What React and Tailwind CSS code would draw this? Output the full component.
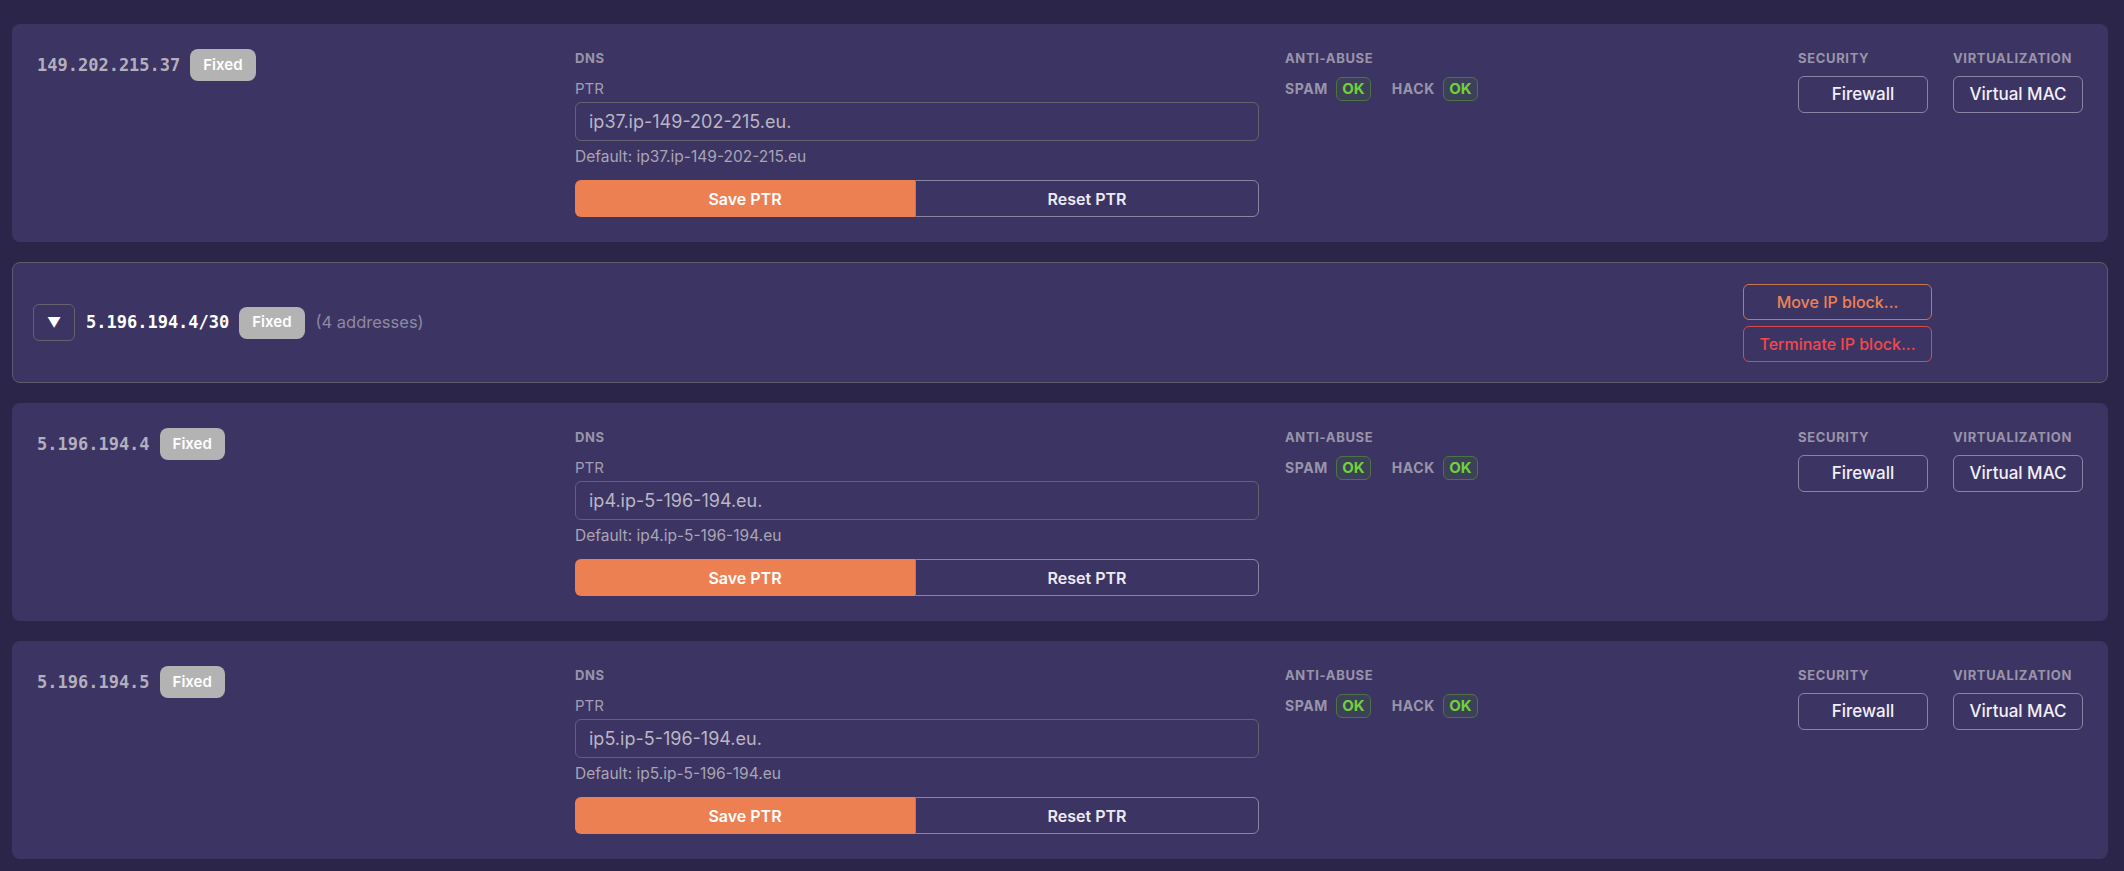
import React from "react";

const sans = { fontFamily: "Inter, 'Open Sans', sans-serif" };

const addresses = [
  { ip: "149.202.215.37", ptr: "ip37.ip-149-202-215.eu." },
  { ip: "5.196.194.4", ptr: "ip4.ip-5-196-194.eu." },
  { ip: "5.196.194.5", ptr: "ip5.ip-5-196-194.eu." },
];

function FixedBadge() {
  return (
    <span className="inline-flex h-8 items-center rounded-lg bg-[#b3b3b3] px-[13px] text-[15px] font-semibold text-white">
      Fixed
    </span>
  );
}

function SectionLabel({ children }) {
  return (
    <div className="h-[18px] text-[13px] font-bold uppercase leading-[18px] tracking-[0.05em] text-[#9a94aa]">
      {children}
    </div>
  );
}

function OkBadge() {
  return (
    <span className="inline-flex h-6 w-[35px] items-center justify-center rounded-md border border-[#4d7345] bg-[#3d4157] text-[15px] font-bold text-[#6fd23b]">
      OK
    </span>
  );
}

function OutlineButton({ children }) {
  return (
    <button className="flex h-[37px] w-[130px] items-center justify-center rounded-md border border-[#8a84a3] text-[17px] font-medium text-[#f1eff7]">
      {children}
    </button>
  );
}

function AddressCard({ ip, ptr }) {
  const fallback = ptr.replace(/\.$/, "");
  return (
    <div className="flex rounded-lg bg-[#3c3463] pl-[25px] pr-[25px] pt-[25px] pb-[25px]">
      <div className="flex w-[538px] items-start gap-[10px]">
        <span className="mt-[3px] font-['DejaVu_Sans_Mono',monospace] text-[17px] font-bold leading-[26px] text-[#b3afbd]">
          {ip}
        </span>
        <FixedBadge />
      </div>

      <div className="flex w-[684px] flex-col">
        <SectionLabel>DNS</SectionLabel>
        <div className="mt-3 text-[15px] leading-5 text-[#a39eb2]">PTR</div>
        <input
          readOnly
          value={ptr}
          className="mt-[3px] h-[39px] w-full rounded-md border border-[#67616f] bg-transparent pl-[13px] text-[18px] text-[#bab6c4] outline-none"
          style={sans}
        />
        <div className="mt-[6px] text-[15.5px] leading-5 text-[#a9a5b3]">Default: {fallback}</div>
        <div className="mt-[13px] flex h-[37px]">
          <button className="w-[340px] rounded-l-md bg-[#ec8053] text-[16px] font-semibold text-white">
            Save PTR
          </button>
          <button className="flex-1 rounded-r-md border border-[#8a84a3] text-[16px] font-semibold text-[#eceaf4]">
            Reset PTR
          </button>
        </div>
      </div>

      <div className="ml-[26px] flex flex-1 flex-col">
        <SectionLabel>Anti-abuse</SectionLabel>
        <div className="mt-[9px] flex items-center">
          <span className="text-[14px] font-bold tracking-[0.04em] text-[#9a94aa]">SPAM</span>
          <span className="ml-[8px]">
            <OkBadge />
          </span>
          <span className="ml-[21px] text-[14px] font-bold tracking-[0.04em] text-[#9a94aa]">HACK</span>
          <span className="ml-[8px]">
            <OkBadge />
          </span>
        </div>
      </div>

      <div className="flex w-[130px] flex-col">
        <SectionLabel>Security</SectionLabel>
        <div className="mt-[9px]">
          <OutlineButton>Firewall</OutlineButton>
        </div>
      </div>

      <div className="ml-[25px] flex w-[130px] flex-col">
        <SectionLabel>Virtualization</SectionLabel>
        <div className="mt-[9px]">
          <OutlineButton>Virtual MAC</OutlineButton>
        </div>
      </div>
    </div>
  );
}

function BlockCard() {
  return (
    <div className="flex h-[121px] items-center rounded-lg border border-[#5f5a6c] bg-[#3c3463] pl-5 pr-[175px]">
      <button className="flex h-[37px] w-[42px] items-center justify-center rounded-md border border-[#67616f] text-[14px] text-white">
        ▼
      </button>
      <span className="ml-[11px] font-['DejaVu_Sans_Mono',monospace] text-[17px] font-bold text-white">
        5.196.194.4/30
      </span>
      <span className="ml-[10px]">
        <FixedBadge />
      </span>
      <span className="ml-[11px] text-[16.5px] text-[#8e89a2]">(4 addresses)</span>
      <div className="ml-auto flex w-[189px] flex-col gap-[6px]">
        <button className="flex h-[36px] items-center justify-center rounded-md border border-[#c9764f] text-[16px] font-medium text-[#ee8254]">
          Move IP block...
        </button>
        <button className="flex h-[36px] items-center justify-center rounded-md border border-[#d84a4d] text-[16px] font-medium text-[#f4484a]">
          Terminate IP block...
        </button>
      </div>
    </div>
  );
}

export default function App() {
  return (
    <div className="min-h-screen bg-[#2b2649] pl-3 pr-4 pt-6 pb-3" style={sans}>
      <div className="flex flex-col gap-5">
        <AddressCard {...addresses[0]} />
        <BlockCard />
        <AddressCard {...addresses[1]} />
        <AddressCard {...addresses[2]} />
      </div>
    </div>
  );
}
